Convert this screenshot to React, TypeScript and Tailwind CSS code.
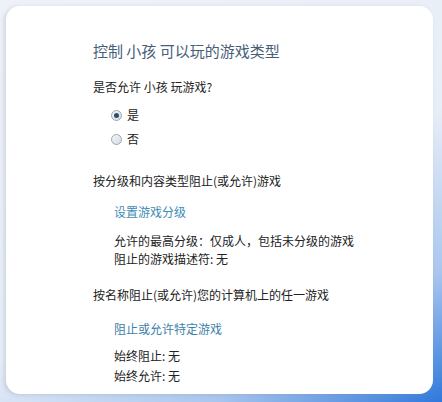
import React from 'react';

const font = { fontFamily: '"Noto Sans CJK SC", "Noto Sans", sans-serif' };

const Radio: React.FC<{ checked?: boolean; label: string }> = ({ checked, label }) => (
    <label className="flex items-center gap-[5px] h-[18px]">
        <span className="w-[11px] h-[11px] rounded-full border border-[#9aa7b4] bg-gradient-to-br from-[#f4f6f8] to-[#d5dbe2] flex items-center justify-center">
            {checked && <span className="w-[5px] h-[5px] rounded-full bg-[#26506f]" />}
        </span>
        <span className="text-[12px] text-[#222]">{label}</span>
    </label>
);

export default function App() {
    return (
        <div
            className="w-[442px] h-[402px] bg-[linear-gradient(150deg,#eef2f8_0%,#e8eef7_55%,#a9c6ee_80%,#2f78dd_100%)] p-[6px] pr-[9px] pb-[8px]"
            style={font}
        >
            <div className="h-full bg-white rounded-[14px] shadow-[-2px_1px_4px_rgba(120,130,150,0.25)] pl-[87px] pt-[34px]">
                <h1 className="text-[15px] leading-[22px] text-[#465e78]">控制 小孩 可以玩的游戏类型</h1>

                <p className="mt-[16px] text-[12px] leading-[18px] text-[#222]">是否允许 小孩 玩游戏?</p>
                <div className="mt-[10px] ml-[18px] flex flex-col gap-[6px]">
                    <Radio checked label="是" />
                    <Radio label="否" />
                </div>

                <p className="mt-[24px] text-[12px] leading-[18px] text-[#222]">按分级和内容类型阻止(或允许)游戏</p>
                <div className="ml-[21px]">
                    <p className="mt-[13px] text-[12px] leading-[18px] text-[#3d8cb4]">设置游戏分级</p>
                    <p className="mt-[11px] text-[12px] leading-[18px] text-[#222]">允许的最高分级：仅成人，包括未分级的游戏</p>
                    <p className="text-[12px] leading-[18px] text-[#222]">阻止的游戏描述符: 无</p>
                </div>

                <p className="mt-[18px] text-[12px] leading-[18px] text-[#222]">按名称阻止(或允许)您的计算机上的任一游戏</p>
                <div className="ml-[21px]">
                    <p className="mt-[16px] text-[12px] leading-[18px] text-[#3d7fa8]">阻止或允许特定游戏</p>
                    <p className="mt-[8px] text-[12px] leading-[20px] text-[#222]">始终阻止: 无</p>
                    <p className="text-[12px] leading-[20px] text-[#222]">始终允许: 无</p>
                </div>
            </div>
        </div>
    );
}
